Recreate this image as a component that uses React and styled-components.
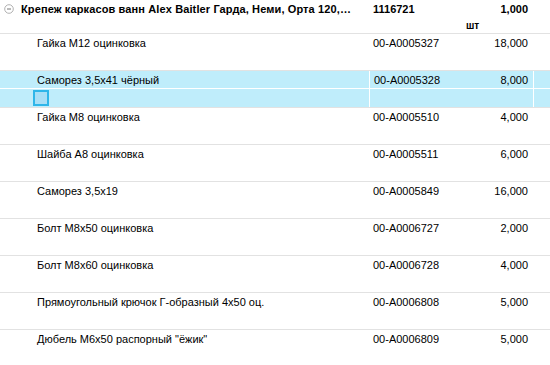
import React from 'react'
import styled, { createGlobalStyle } from 'styled-components';

const GlobalStyle = createGlobalStyle`
    body {
        margin: 0;
        background: #fff;
        font-family: "Liberation Sans", Arial, sans-serif;
        font-size: 11px;
        color: #000;
    }
`;

const Table = styled.div`
    width: 550px;
    height: 365px;
    overflow: hidden;
    background: #fff;
`;

const Group = styled.div`
    display: grid;
    grid-template-columns: 369px 164px 17px;
    grid-template-rows: 17px 16px;
    font-weight: bold;
`;

const Title = styled.div`
    display: flex;
    align-items: center;
    gap: 7px;
    padding-left: 4px;
    white-space: nowrap;
    letter-spacing: 0.12px;
`;

const Data = styled.div`
    flex: 1;
    display: flex;
    align-items: center;
    justify-content: space-between;
    padding: 0 5px 0 4px;
    white-space: nowrap;
`;

const Unit = styled.div`
    grid-column: 2;
    display: flex;
    align-items: center;
    padding-left: 97px;
    font-size: 10px;
`;

const Row = styled.div`
    display: grid;
    grid-template-columns: 369px 164px 17px;
    grid-template-rows: 17px 18px;
    row-gap: 1px;
    border-top: 1px solid #e2e2e2;
    background: ${p => (p.$selected ? '#fff' : 'transparent')};
`;

const Cell = styled.div`
    display: flex;
    align-items: center;
    background: ${p => (p.$selected ? '#bfedfb' : '#fff')};
    border-left: ${p => (p.$selected && p.$edge ? '1px solid #fff' : 'none')};
    padding-left: ${p => p.$indent || 0}px;
    white-space: nowrap;
    overflow: hidden;
`;

const Marker = styled.div`
    width: 12px;
    height: 12px;
    margin-left: 33px;
    border: 2px solid #2fb6e9;
    background: #a9dff6;
`;

const Collapse = () => (
    <svg width="10" height="10" viewBox="0 0 10 10">
        <circle cx="5" cy="5" r="4.3" fill="#fff" stroke="#a8a8a8" strokeWidth="0.9" />
        <line x1="3" y1="5" x2="7" y2="5" stroke="#777" strokeWidth="1" />
    </svg>
);

const items = [
    ['Гайка М12 оцинковка', '00-А0005327', '18,000'],
    ['Саморез 3,5х41 чёрный', '00-А0005328', '8,000', true],
    ['Гайка М8 оцинковка', '00-А0005510', '4,000'],
    ['Шайба А8 оцинковка', '00-А0005511', '6,000'],
    ['Саморез 3,5х19', '00-А0005849', '16,000'],
    ['Болт М8х50 оцинковка', '00-А0006727', '2,000'],
    ['Болт М8х60 оцинковка', '00-А0006728', '4,000'],
    ['Прямоугольный крючок Г-образный 4х50 оц.', '00-А0006808', '5,000'],
    ['Дюбель М6х50 распорный "ёжик"', '00-А0006809', '5,000'],
];

const ItemRow = ({ name, code, qty, selected }) => (
    <Row $selected={selected}>
        <Cell $selected={selected} $indent={37}>{name}</Cell>
        <Cell $selected={selected} $edge>
            <Data>
                <span>{code}</span>
                <span>{qty}</span>
            </Data>
        </Cell>
        <Cell $selected={selected} $edge />
        <Cell $selected={selected}>{selected && <Marker />}</Cell>
        <Cell $selected={selected} $edge />
        <Cell $selected={selected} $edge />
    </Row>
);

export default function App() {
    return (
        <>
            <GlobalStyle />
            <Table>
                <Group>
                    <Title>
                        <Collapse />
                        <span>Крепеж каркасов ванн Alex Baitler Гарда, Неми, Орта 120,…</span>
                    </Title>
                    <Data>
                        <span>1116721</span>
                        <span>1,000</span>
                    </Data>
                    <div />
                    <Unit>шт</Unit>
                </Group>
                {items.map(([name, code, qty, sel]) => (
                    <ItemRow key={code} name={name} code={code} qty={qty} selected={sel} />
                ))}
            </Table>
        </>
    );
}
